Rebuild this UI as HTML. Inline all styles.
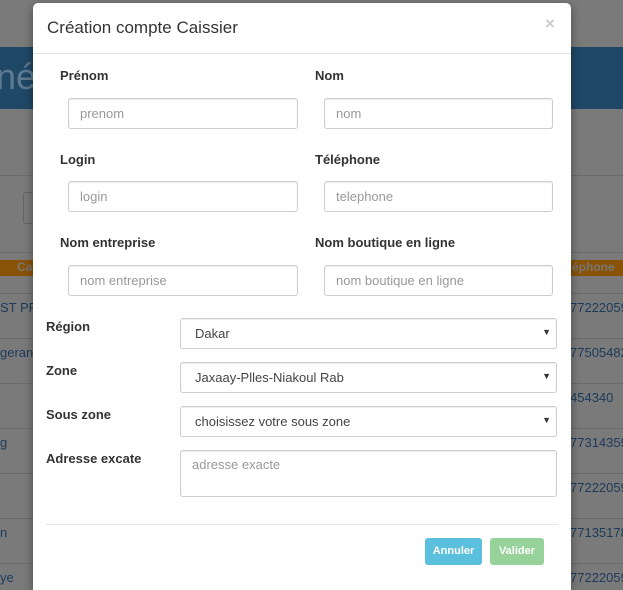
<!DOCTYPE html>
<html style="width:623px;height:590px;overflow:hidden"><head><meta charset="utf-8"><style>
html,body{margin:0;width:623px;height:590px;overflow:hidden}
body{background:#7a7a7a;font-family:"Liberation Sans",sans-serif;position:relative}
.a{position:absolute}
.blue{left:0;right:0;top:47px;height:62px;background:#1f4866}
.hl{left:0;right:0;height:1px;background:#6a6a6a}
.or{left:0;right:0;top:260px;height:16px;background:#8a5204}
.bg{color:#1c3a5a;font-size:13px}
.modal{left:33px;top:3px;width:538px;height:587px;background:#fff;border-radius:5px 5px 0 0;box-shadow:0 3px 10px rgba(0,0,0,.4)}
.lbl{font-weight:bold;font-size:13px;color:#333}
.inp{border:1px solid #ccc;border-radius:3px;height:29px;box-sizing:border-box;font-size:13px;color:#999;padding:7px 11px;box-shadow:inset 0 1px 1px rgba(0,0,0,.075)}
.sel{color:#444;padding-left:14px}
.arr{position:absolute;right:5px;top:8px;font-size:9px;color:#333}
.btn{color:#fff;font-size:11px;font-weight:bold;text-align:center;line-height:27px;height:27px;border-radius:3px}
</style></head><body>
<div class="a blue"></div>
<div class="a" style="left:-4px;top:56px;font-size:36px;color:#5d7a92">nét</div>
<div class="a hl" style="top:175px"></div>
<div class="a" style="left:23px;top:192px;width:20px;height:30px;border:1px solid #666;border-radius:3px"></div>
<div class="a hl" style="top:252px"></div>
<div class="a or"></div>
<div class="a" style="left:17px;top:260px;font-size:12px;font-weight:bold;color:#777">Ca</div>
<div class="a" style="left:562px;top:260px;font-size:12px;font-weight:bold;color:#777">éléphone</div>
<div class="a hl" style="top:293px"></div>
<div class="a hl" style="top:338px"></div>
<div class="a hl" style="top:383px"></div>
<div class="a hl" style="top:428px"></div>
<div class="a hl" style="top:473px"></div>
<div class="a hl" style="top:518px"></div>
<div class="a hl" style="top:563px"></div>
<div class="a bg" style="left:0;top:300px">ST PF</div>
<div class="a bg" style="left:0;top:345px">gerant</div>
<div class="a bg" style="left:0;top:435px">g</div>
<div class="a bg" style="left:0;top:525px">n</div>
<div class="a bg" style="left:0;top:570px">ye</div>
<div class="a bg" style="left:570px;top:300px">77222059</div>
<div class="a bg" style="left:570px;top:345px">77505482</div>
<div class="a bg" style="left:570px;top:390px">454340</div>
<div class="a bg" style="left:570px;top:435px">77314359</div>
<div class="a bg" style="left:570px;top:480px">77222059</div>
<div class="a bg" style="left:570px;top:525px">77135178</div>
<div class="a bg" style="left:570px;top:570px">77222059</div>

<div class="a modal">
<div class="a" style="left:14px;top:15px;font-size:17px;color:#333">Création compte Caissier</div>
<div class="a" style="left:512px;top:11px;font-size:17px;color:#ccc;font-weight:bold">×</div>
<div class="a" style="left:0;right:0;top:50px;height:1px;background:#e5e5e5"></div>
<div class="a lbl" style="left:27px;top:65px">Prénom</div>
<div class="a lbl" style="left:282px;top:65px">Nom</div>
<div class="a inp" style="left:35px;top:95px;width:230px;height:31px">prenom</div>
<div class="a inp" style="left:291px;top:95px;width:229px;height:31px">nom</div>
<div class="a lbl" style="left:27px;top:149px">Login</div>
<div class="a lbl" style="left:282px;top:149px">Téléphone</div>
<div class="a inp" style="left:35px;top:178px;width:230px;height:31px">login</div>
<div class="a inp" style="left:291px;top:178px;width:229px;height:31px">telephone</div>
<div class="a lbl" style="left:27px;top:232px">Nom entreprise</div>
<div class="a lbl" style="left:282px;top:232px">Nom boutique en ligne</div>
<div class="a inp" style="left:35px;top:262px;width:230px;height:31px">nom entreprise</div>
<div class="a inp" style="left:291px;top:262px;width:229px;height:31px">nom boutique en ligne</div>
<div class="a lbl" style="left:13px;top:316px">Région</div>
<div class="a inp sel" style="left:147px;top:315px;width:377px;height:31px">Dakar<span class="arr">▼</span></div>
<div class="a lbl" style="left:13px;top:360px">Zone</div>
<div class="a inp sel" style="left:147px;top:359px;width:377px;height:31px">Jaxaay-Plles-Niakoul Rab<span class="arr">▼</span></div>
<div class="a lbl" style="left:13px;top:404px">Sous zone</div>
<div class="a inp sel" style="left:147px;top:403px;width:377px;height:31px">choisissez votre sous zone<span class="arr">▼</span></div>
<div class="a lbl" style="left:13px;top:448px">Adresse excate</div>
<div class="a inp" style="left:147px;top:447px;width:377px;height:47px;padding-top:6px">adresse exacte</div>
<div class="a" style="left:13px;right:13px;top:521px;height:1px;background:#e5e5e5"></div>
<div class="a btn" style="left:392px;top:535px;width:57px;background:#5bc0de">Annuler</div>
<div class="a btn" style="left:457px;top:535px;width:54px;background:#96d29a">Valider</div>
</div>
</body></html>
